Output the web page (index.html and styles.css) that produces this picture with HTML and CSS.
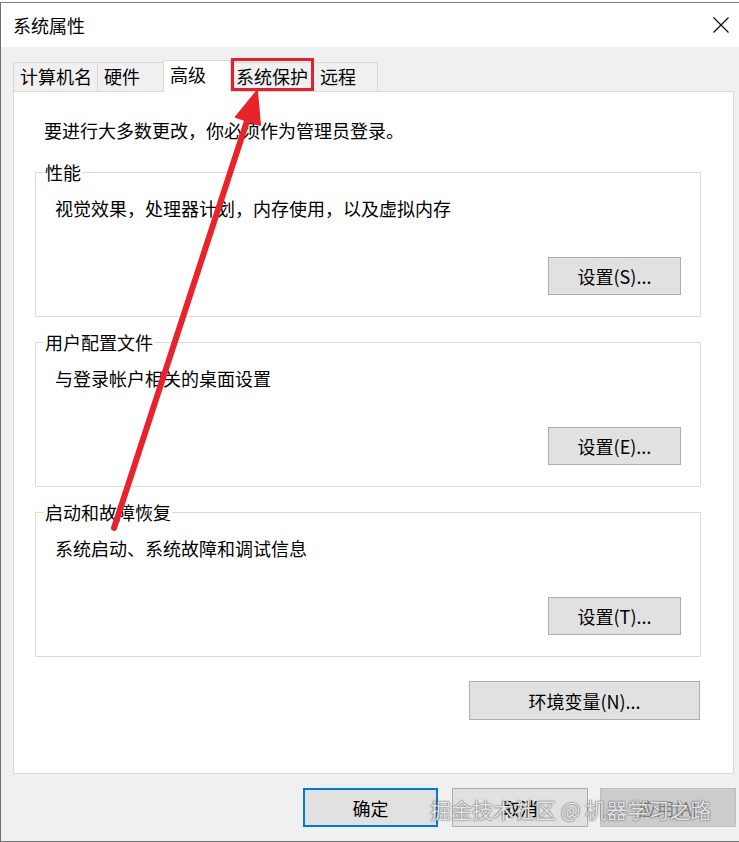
FILE: index.html
```html
<!DOCTYPE html>
<html lang="zh-CN">
<head>
<meta charset="utf-8">
<title>系统属性</title>
<link rel="stylesheet" href="styles.css">
</head>
<body>
<div class="window">
  <div class="titlebar">
    <span class="title">系统属性</span>
    <svg class="close" width="16" height="16" viewBox="0 0 16 16"><path d="M0.5 0.5 L15.5 15.5 M15.5 0.5 L0.5 15.5" stroke="#000" stroke-width="1.1" fill="none"/></svg>
  </div>
  <div class="body">
    <div class="tabs">
      <div class="tab tab-name">计算机名</div>
      <div class="tab tab-hw">硬件</div>
      <div class="tab tab-active">高级</div>
      <div class="tab tab-protect">系统保护</div>
      <div class="tab tab-remote">远程</div>
    </div>
    <div class="panel">
      <p class="intro">要进行大多数更改，你必须作为管理员登录。</p>
      <fieldset class="group">
        <legend>性能</legend>
        <p class="desc">视觉效果，处理器计划，内存使用，以及虚拟内存</p>
        <div class="actions"><button class="btn btn-set">设置(S)...</button></div>
      </fieldset>
      <fieldset class="group">
        <legend>用户配置文件</legend>
        <p class="desc">与登录帐户相关的桌面设置</p>
        <div class="actions"><button class="btn btn-set">设置(E)...</button></div>
      </fieldset>
      <fieldset class="group">
        <legend>启动和故障恢复</legend>
        <p class="desc">系统启动、系统故障和调试信息</p>
        <div class="actions"><button class="btn btn-set">设置(T)...</button></div>
      </fieldset>
      <div class="env-row"><button class="btn btn-env">环境变量(N)...</button></div>
    </div>
    <div class="footer">
      <button class="btn btn-ok">确定</button>
      <button class="btn btn-cancel">取消</button>
      <button class="btn btn-apply">应用(A)</button>
      <div class="watermark">掘金技术社区 @ 机器学习之路</div>
    </div>
  </div>
</div>
<svg class="annot" width="739" height="842" viewBox="0 0 739 842">
  <rect x="232.5" y="59.5" width="80" height="30" fill="none" stroke="#e3202b" stroke-width="3"/>
  <line x1="114" y1="528" x2="248" y2="118" stroke="#e8232c" stroke-width="6" stroke-linecap="round"/>
  <polygon points="257,91 236,117 260,125" fill="#e8232c" stroke="#e8232c" stroke-width="2" stroke-linejoin="round"/>
</svg>
</body>
</html>
```

FILE: styles.css
```css
html, body {
  margin: 0;
  padding: 0;
  background: #ffffff;
}

body {
  width: 739px;
  height: 842px;
  overflow: hidden;
  font-family: "Noto Sans CJK SC", "Noto Sans", sans-serif;
  font-size: 18px;
  color: #000;
}

.window {
  margin-top: 2px;
  height: 840px;
  box-sizing: border-box;
  border-top: 1px solid #7a7a7a;
  border-left: 1px solid #6e6e6e;
  border-bottom: 1px solid #6e6e6e;
  display: flex;
  flex-direction: column;
}

.titlebar {
  height: 44px;
  flex: none;
  background: #ffffff;
  display: flex;
  align-items: center;
  justify-content: space-between;
  padding: 0 10px 0 12px;
}

.title {
  font-size: 18px;
  line-height: 24px;
}

.close {
  display: block;
}

.body {
  flex: 1;
  background: #f0f0f0;
  padding: 13px 0 0 12px;
  display: flex;
  flex-direction: column;
}

.tabs {
  height: 31px;
  display: flex;
  align-items: flex-end;
}

.tab {
  box-sizing: border-box;
  height: 29px;
  border-top: 1px solid #d9d9d9;
  border-left: 1px solid #d9d9d9;
  padding-left: 6px;
  line-height: 27px;
  font-size: 18px;
  background: #f0f0f0;
  white-space: nowrap;
}

.tab-name { width: 84px; }
.tab-hw { width: 66px; }
.tab-active {
  width: 68px;
  height: 32px;
  margin-bottom: -1px;
  background: #ffffff;
  border-right: 1px solid #d9d9d9;
  position: relative;
  z-index: 1;
  line-height: 27px;
}
.tab-protect {
  width: 82px;
  border-left: none;
  padding-left: 5px;
}
.tab-remote {
  width: 65px;
  border-right: 1px solid #d9d9d9;
}

.panel {
  box-sizing: border-box;
  width: 721px;
  height: 683px;
  background: #ffffff;
  border: 1px solid #d9d9d9;
  padding: 26px 32px 0 21px;
}

.intro {
  margin: 0 0 20px 9px;
  line-height: 24px;
}

.group {
  margin: 0 0 15px 0;
  padding: 14px 19px 21px 19px;
  border: 1px solid #dcdcdc;
  min-width: 0;
}

.group legend {
  padding: 0 1px;
  margin-left: -11px;
  line-height: 20px;
  font-size: 18px;
}

.desc {
  margin: 0;
  line-height: 24px;
}

.actions {
  display: flex;
  justify-content: flex-end;
  margin-top: 37px;
}

.btn {
  box-sizing: border-box;
  font-family: "Noto Sans CJK SC", "Noto Sans", sans-serif;
  font-size: 18px;
  color: #000;
  background: #e1e1e1;
  border: 1px solid #adadad;
  border-radius: 0;
  padding: 0;
  line-height: 24px;
}

.btn-set {
  width: 133px;
  height: 38px;
}

.env-row {
  display: flex;
  justify-content: flex-end;
  margin-top: 24px;
  margin-right: 1px;
}

.btn-env {
  width: 231px;
  height: 39px;
}

.footer {
  position: relative;
  display: flex;
  padding: 14px 0 0 290px;
}

.footer .btn {
  height: 39px;
}

.btn-ok {
  width: 135px;
  border: 2px solid #0078d7;
}

.btn-cancel {
  width: 136px;
  margin-left: 14px;
}

.btn-apply {
  width: 136px;
  margin-left: 12px;
  background: #cccccc;
  border-color: #bfbfbf;
  color: #838383;
}

.watermark {
  position: absolute;
  left: 417px;
  top: 22px;
  font-size: 21px;
  line-height: 26px;
  color: rgba(255, 255, 255, 0.85);
  text-shadow: 0 0 1px #555, 0 0 2px rgba(0, 0, 0, 0.5);
  white-space: nowrap;
  pointer-events: none;
}

.annot {
  position: absolute;
  left: 0;
  top: 0;
  pointer-events: none;
}
```
